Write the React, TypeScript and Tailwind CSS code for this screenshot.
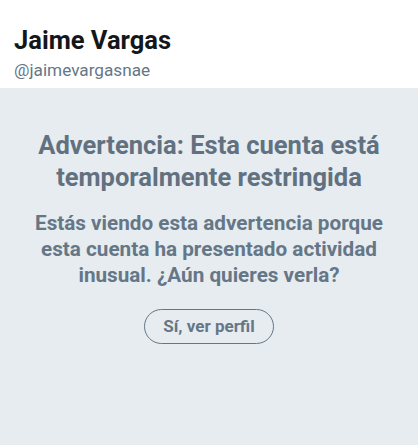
export default function App() {
  return (
    <div className="w-[418px] h-[445px] flex flex-col bg-white font-['Roboto',sans-serif]">
      <header className="px-[14px] pt-[25px] pb-[8px]">
        <h1 className="text-[25.5px] leading-[30px] font-bold text-[#14171a]">
          Jaime Vargas
        </h1>
        <p className="mt-[5px] text-[17.2px] leading-[20px] text-[#657786]">
          @jaimevargasnae
        </p>
      </header>
      <main className="flex-1 bg-[#e6ecf0] flex flex-col items-center pt-[41px] px-2 text-center">
        <h2 className="text-[25.5px] leading-[32px] font-bold text-[#627180]">
          Advertencia: Esta cuenta está
          <br />
          temporalmente restringida
        </h2>
        <p className="mt-[17px] text-[20.7px] leading-[26px] font-bold text-[#657786]">
          Estás viendo esta advertencia porque
          <br />
          esta cuenta ha presentado actividad
          <br />
          inusual. ¿Aún quieres verla?
        </p>
        <button className="mt-[21px] h-[35px] px-[18px] rounded-full border border-[#657786] text-[17px] font-bold text-[#657786]">
          Sí, ver perfil
        </button>
      </main>
    </div>
  );
}
